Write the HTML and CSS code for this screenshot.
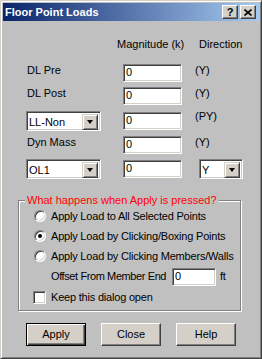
FILE: index.html
```html
<!DOCTYPE html>
<html lang="en">
<head>
    <meta charset="UTF-8">
    <title>Floor Point Loads</title>
    <link rel="stylesheet" href="styles.css">
</head>
<body>
    <div class="window">
        <div class="titlebar">
            <span class="title">Floor Point Loads</span>
            <div class="cap-btns">
                <span class="cap-btn">?</span>
                <span class="cap-btn">
                    <svg width="8" height="7" viewBox="0 0 8 7"><path d="M0.5 0.5 L7.5 6.5 M7.5 0.5 L0.5 6.5" stroke="#000" stroke-width="1.6" fill="none"/></svg>
                </span>
            </div>
        </div>

        <div class="client">
            <div class="load-grid">
                <span></span>
                <span class="head head-mag">Magnitude (k)</span>
                <span class="head head-dir">Direction</span>

                <span class="label">DL Pre</span>
                <div class="edit">0</div>
                <span class="dir">(Y)</span>

                <span class="label">DL Post</span>
                <div class="edit">0</div>
                <span class="dir">(Y)</span>

                <div class="combo combo-case"><span class="combo-text">LL-Non</span><span class="drop"></span></div>
                <div class="edit">0</div>
                <span class="dir">(PY)</span>

                <span class="label">Dyn Mass</span>
                <div class="edit">0</div>
                <span class="dir">(Y)</span>

                <div class="combo combo-case"><span class="combo-text">OL1</span><span class="drop"></span></div>
                <div class="edit">0</div>
                <div class="combo combo-dir"><span class="combo-text">Y</span><span class="drop"></span></div>
            </div>

            <div class="group">
                <span class="legend">What happens when Apply is pressed?</span>
                <div class="opt"><span class="radio"></span>Apply Load to All Selected Points</div>
                <div class="opt"><span class="radio checked"></span>Apply Load by Clicking/Boxing Points</div>
                <div class="opt"><span class="radio"></span>Apply Load by Clicking Members/Walls</div>
                <div class="offset-row">
                    <span class="offset-label">Offset From Member End</span>
                    <div class="edit edit-small">0</div>
                    <span class="unit">ft</span>
                </div>
                <div class="opt check-row"><span class="checkbox"></span>Keep this dialog open</div>
            </div>

            <div class="buttons">
                <div class="btn btn-default">Apply</div>
                <div class="btn">Close</div>
                <div class="btn">Help</div>
            </div>
        </div>
    </div>
</body>
</html>
```

FILE: styles.css
```css
* {
    margin: 0;
    padding: 0;
    box-sizing: border-box;
}

body {
    font-family: 'Liberation Sans', Arial, sans-serif;
    font-size: 11px;
    line-height: 13px;
    color: #000;
    background: #c0c0c0;
}

.window {
    width: 262px;
    height: 359px;
    padding: 2px;
    background: #c0c0c0;
    border: 1px solid;
    border-color: #d4d0c8 #404040 #404040 #d4d0c8;
    box-shadow: inset 1px 1px 0 #fff, inset -1px -1px 0 #808080;
}

.titlebar {
    height: 18px;
    display: flex;
    align-items: center;
    justify-content: space-between;
    padding: 0 3px 0 2px;
    background: linear-gradient(to right, #0a246a, #a6caf0);
}

.title {
    color: #fff;
    font-weight: bold;
}

.cap-btns {
    display: flex;
    gap: 2px;
}

.cap-btn {
    width: 16px;
    height: 14px;
    display: flex;
    align-items: center;
    justify-content: center;
    font-weight: bold;
    background: #d4d0c8;
    border: 1px solid;
    border-color: #fff #404040 #404040 #fff;
    box-shadow: inset -1px -1px 0 #808080;
}

.client {
    padding: 17px 0 0 15px;
}

.load-grid {
    margin-left: 8px;
    display: grid;
    grid-template-columns: 97px 72px 1fr;
    grid-template-rows: 21px 18px 18px 21px 18px 20px;
    row-gap: 5px;
    align-items: center;
}

.head,
.label,
.dir {
    align-self: start;
}

.head-mag {
    margin-left: -6px;
}

.head-dir {
    margin-left: 4px;
}

.label {
    padding-left: 1px;
}

.edit {
    width: 59px;
    height: 18px;
    padding-left: 2px;
    line-height: 15px;
    background: #fff;
    border: 1px solid;
    border-color: #808080 #fff #fff #808080;
    box-shadow: inset 1px 1px 0 #404040, inset -1px -1px 0 #d4d0c8;
}

.edit-small {
    width: 44px;
    flex: none;
}

.combo {
    height: 20px;
    display: flex;
    padding: 2px;
    background: #fff;
    border: 1px solid;
    border-color: #808080 #fff #fff #808080;
    box-shadow: inset 1px 1px 0 #404040, inset -1px -1px 0 #d4d0c8;
}

.combo-case {
    width: 75px;
}

.combo-dir {
    width: 44px;
    margin-left: 4px;
}

.combo-text {
    flex: 1;
    line-height: 16px;
}

.drop {
    width: 16px;
    height: 16px;
    display: flex;
    align-items: center;
    justify-content: center;
    background: #d4d0c8;
    border: 1px solid;
    border-color: #d4d0c8 #404040 #404040 #d4d0c8;
    box-shadow: inset 1px 1px 0 #fff, inset -1px -1px 0 #808080;
}

.drop::after {
    content: '';
    border-top: 4px solid #000;
    border-left: 3.5px solid transparent;
    border-right: 3.5px solid transparent;
}

.group {
    position: relative;
    width: 223px;
    margin-top: 21px;
    padding: 5px 0 3px 15px;
    border: 1px solid #808080;
    box-shadow: 1px 1px 0 #fff, inset 1px 1px 0 #fff;
    white-space: nowrap;
    letter-spacing: -0.2px;
}

.legend {
    position: absolute;
    top: -7px;
    left: 6px;
    padding: 0 2px;
    color: #ff0000;
    background: #c0c0c0;
    letter-spacing: 0;
}

.opt {
    height: 20px;
    display: flex;
    align-items: center;
    gap: 5px;
}

.radio {
    width: 12px;
    height: 12px;
    flex: none;
    display: flex;
    align-items: center;
    justify-content: center;
    border-radius: 50%;
    background: #fff;
    border: 1px solid;
    border-color: #808080 #fff #fff #808080;
    box-shadow: inset 1px 1px 0 #404040, inset -1px -1px 0 #d4d0c8;
}

.radio.checked::after {
    content: '';
    width: 4px;
    height: 4px;
    border-radius: 50%;
    background: #000;
}

.offset-row {
    height: 21px;
    display: flex;
    align-items: center;
    padding-left: 17px;
}

.offset-label {
    width: 121px;
    flex: none;
    letter-spacing: -0.4px;
}

.unit {
    margin-left: 4px;
}

.checkbox {
    width: 13px;
    height: 13px;
    flex: none;
    margin-left: -1px;
    background: #fff;
    border: 1px solid;
    border-color: #808080 #fff #fff #808080;
    box-shadow: inset 1px 1px 0 #404040, inset -1px -1px 0 #d4d0c8;
}

.buttons {
    display: flex;
    gap: 15px;
    margin: 12px 0 0 8px;
}

.btn {
    width: 60px;
    height: 23px;
    display: flex;
    align-items: center;
    justify-content: center;
    background: #d4d0c8;
    border: 1px solid;
    border-color: #fff #404040 #404040 #fff;
    box-shadow: inset -1px -1px 0 #808080;
}

.btn-default {
    border-color: #000;
    box-shadow: inset 1px 1px 0 #fff, inset -1px -1px 0 #404040, inset -2px -2px 0 #808080;
}
```
